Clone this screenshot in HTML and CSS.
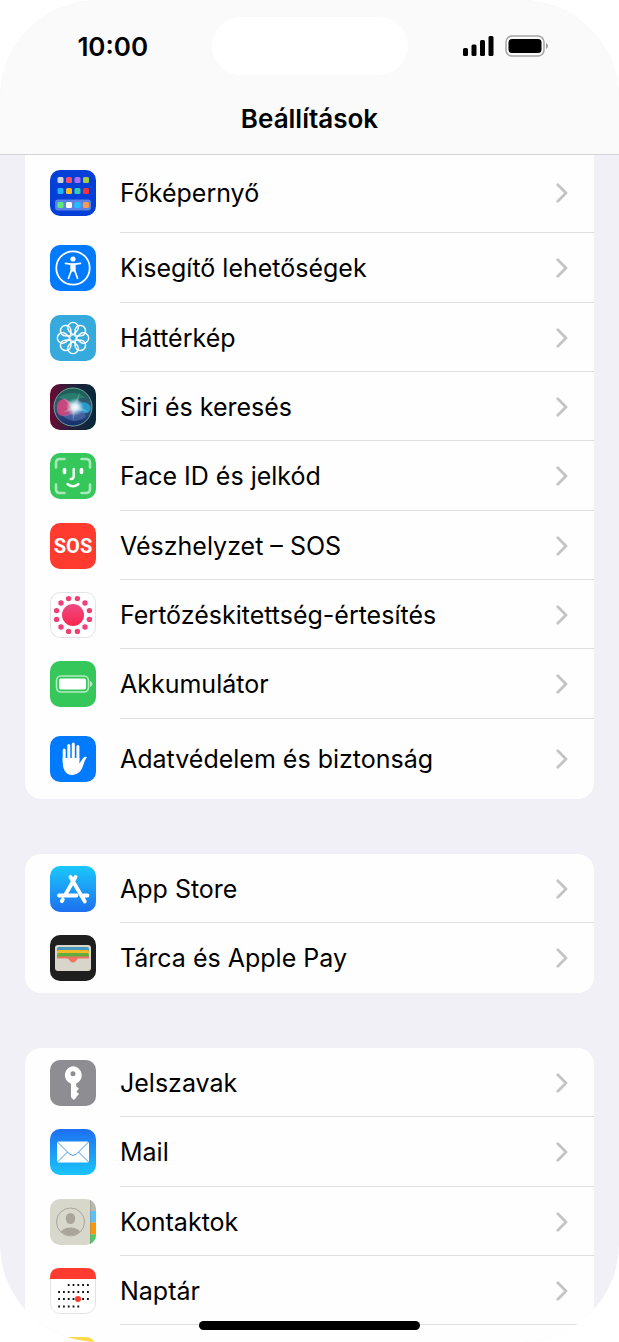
FILE: index.html
```html
<!DOCTYPE html>
<html lang="hu">
<head>
    <meta charset="UTF-8">
    <meta name="viewport" content="width=device-width, initial-scale=1.0">
    <title>Beállítások</title>
    <link rel="stylesheet" href="styles.css">
</head>
<body>
    <svg class="defs" aria-hidden="true">
        <defs>
            <symbol id="chevron" viewBox="0 0 12 20">
                <path d="M1.800 1.800 10 10l-8.200 8.200" fill="none" stroke="#c4c4c6" stroke-width="2.800" stroke-linecap="round" stroke-linejoin="round"/>
            </symbol>
            <linearGradient id="storeBlue" x1="0" y1="0" x2="0" y2="1">
                <stop offset="0" stop-color="#1ac8fc"/>
                <stop offset="1" stop-color="#1d70f0"/>
            </linearGradient>
            <linearGradient id="mailBlue" x1="0" y1="0" x2="0" y2="1">
                <stop offset="0" stop-color="#1e6ff1"/>
                <stop offset="1" stop-color="#19c5fb"/>
            </linearGradient>
            <linearGradient id="siriBack" x1="0" y1="0" x2="1" y2="0">
                <stop offset="0" stop-color="#6b0b33"/>
                <stop offset="0.500" stop-color="#22203c"/>
                <stop offset="1" stop-color="#05293a"/>
            </linearGradient>
            <linearGradient id="siriOrb" x1="0" y1="0" x2="0" y2="1">
                <stop offset="0" stop-color="#176052"/>
                <stop offset="0.500" stop-color="#3b5977"/>
                <stop offset="1" stop-color="#15296e"/>
            </linearGradient>
            <radialGradient id="siriGlow">
                <stop offset="0" stop-color="#fff"/>
                <stop offset="0.350" stop-color="#e8fbff" stop-opacity="0.850"/>
                <stop offset="1" stop-color="#bfefff" stop-opacity="0"/>
            </radialGradient>
            <linearGradient id="virusPink" x1="0" y1="0" x2="0" y2="1">
                <stop offset="0" stop-color="#ee4a83"/>
                <stop offset="1" stop-color="#fa2550"/>
            </linearGradient>
            <path id="petal" d="M23 20 18.800 15.700A5.200 5.200 0 1 1 27.200 15.700Z"/>
        </defs>
    </svg>

    <div class="phone">
        <header class="header">
            <div class="status-bar">
                <span class="time">10:00</span>
                <div class="island"></div>
                <div class="status-icons">
                    <svg width="32" height="20" viewBox="0 0 32 20" aria-label="Térerő">
                        <rect x="0" y="12" width="5" height="8" rx="1.500"/>
                        <rect x="8.500" y="8.500" width="5" height="11.500" rx="1.500"/>
                        <rect x="17" y="4" width="5" height="16" rx="1.500"/>
                        <rect x="25.500" y="0" width="5" height="20" rx="1.500"/>
                    </svg>
                    <svg width="44" height="22" viewBox="0 0 44 22" aria-label="Akkumulátor">
                        <rect x="1" y="1" width="38" height="20" rx="6" fill="none" stroke="#a5a5a5" stroke-width="1.500"/>
                        <rect x="3.500" y="4" width="33" height="14" rx="3.500"/>
                        <path d="M41 8q2 .8 2 3t-2 3z" fill="#999"/>
                    </svg>
                </div>
            </div>
            <h1>Beállítások</h1>
        </header>

        <main class="content">
            <ul class="group group-top">
                <li class="row row-first">
                    <a href="#">
                        <svg class="icon" viewBox="0 0 46 46">
                            <rect width="46" height="46" rx="10" fill="#0440d8"/>
                            <rect x="5" y="29.500" width="36" height="11" rx="3" fill="#5b82e6"/>
                            <g>
                                <rect x="7.500" y="7" width="6" height="6" rx="1.500" fill="#cdd5dc"/>
                                <rect x="16" y="7" width="6" height="6" rx="1.500" fill="#f4506a"/>
                                <rect x="24.500" y="7" width="6" height="6" rx="1.500" fill="#ac6cf5"/>
                                <rect x="33" y="7" width="6" height="6" rx="1.500" fill="#a4cd44"/>
                                <rect x="7.500" y="18" width="6" height="6" rx="1.500" fill="#1cb4fa"/>
                                <rect x="16" y="18" width="6" height="6" rx="1.500" fill="#fabf1c"/>
                                <rect x="24.500" y="18" width="6" height="6" rx="1.500" fill="#36cda8"/>
                                <rect x="33" y="18" width="6" height="6" rx="1.500" fill="#f0323c"/>
                                <rect x="7.500" y="32" width="6" height="6" rx="1.500" fill="#5ce87c"/>
                                <rect x="16" y="32" width="6" height="6" rx="1.500" fill="#fff"/>
                                <rect x="24.500" y="32" width="6" height="6" rx="1.500" fill="#1cc3fa"/>
                                <rect x="33" y="32" width="6" height="6" rx="1.500" fill="#f99b50"/>
                            </g>
                        </svg>
                        <span class="label">Főképernyő</span>
                        <svg class="chevron"><use href="#chevron"/></svg>
                    </a>
                </li>
                <li class="row">
                    <a href="#">
                        <svg class="icon" viewBox="0 0 46 46">
                            <rect width="46" height="46" rx="10" fill="#007aff"/>
                            <circle cx="23" cy="23" r="16.700" fill="none" stroke="#fff" stroke-width="1.800"/>
                            <circle cx="23" cy="14" r="2.600" fill="#fff"/>
                            <path d="M15.500 18.300 21 19.200h4l5.500-.9M21.300 20v5.500l-2.800 7.800M24.700 20v5.500l2.800 7.800" fill="none" stroke="#fff" stroke-width="1.700" stroke-linecap="round" stroke-linejoin="round"/>
                            <path d="M20.700 18.700h4.600v6.800l-1 2-1.300-1.500-1.300 1.500-1-2z" fill="#fff"/>
                        </svg>
                        <span class="label">Kisegítő lehetőségek</span>
                        <svg class="chevron"><use href="#chevron"/></svg>
                    </a>
                </li>
                <li class="row">
                    <a href="#">
                        <svg class="icon" viewBox="0 0 46 46">
                            <rect width="46" height="46" rx="10" fill="#36aadc"/>
                            <g fill="none" stroke="#fff" stroke-width="1.500" stroke-linejoin="round">
                                <use href="#petal"/>
                                <use href="#petal" transform="rotate(45 23 23)"/>
                                <use href="#petal" transform="rotate(90 23 23)"/>
                                <use href="#petal" transform="rotate(135 23 23)"/>
                                <use href="#petal" transform="rotate(180 23 23)"/>
                                <use href="#petal" transform="rotate(225 23 23)"/>
                                <use href="#petal" transform="rotate(270 23 23)"/>
                                <use href="#petal" transform="rotate(315 23 23)"/>
                            </g>
                        </svg>
                        <span class="label">Háttérkép</span>
                        <svg class="chevron"><use href="#chevron"/></svg>
                    </a>
                </li>
                <li class="row">
                    <a href="#">
                        <svg class="icon" viewBox="0 0 46 46">
                            <rect width="46" height="46" rx="10" fill="url(#siriBack)"/>
                            <circle cx="23" cy="23" r="19" fill="url(#siriOrb)" stroke="#69a99b" stroke-width="1"/>
                            <path d="M7 25C6 15 16 11 21 20l6 6c-5 5-9 7-14 6-4 0-6-3-6-7z" fill="#e0457d" opacity="0.850"/>
                            <path d="M25 23c5-6 12-6 15-1 2 5-2 8-7 7-4-1-6-4-8-6z" fill="#22a8d8" opacity="0.850"/>
                            <path d="M12 31c7 1 12-8 16-16 4 5 6 12 8 18-7 5-16 6-24-2z" fill="#5c7fc8" opacity="0.500"/>
                            <path d="M8 14c8-6 20-7 28 0-8-1-10 4-13 9-3-5-7-9-15-9z" fill="#2a9c7c" opacity="0.500"/>
                            <path d="M12 13 24 20 30 8l-3 13 12 7-13-2-3 11-1-11-10 3 9-6z" fill="#dff" opacity="0.250"/>
                            <circle cx="25" cy="23" r="9" fill="url(#siriGlow)"/>
                        </svg>
                        <span class="label">Siri és keresés</span>
                        <svg class="chevron"><use href="#chevron"/></svg>
                    </a>
                </li>
                <li class="row">
                    <a href="#">
                        <svg class="icon" viewBox="0 0 46 46">
                            <rect width="46" height="46" rx="10" fill="#35c759"/>
                            <path d="M6 14.500V10q0-4 4-4h4.500M31.500 6H36q4 0 4 4v4.500M40 31.500V36q0 4-4 4h-4.500M14.500 40H10q-4 0-4-4v-4.500" fill="none" stroke="#a9e8b8" stroke-width="2.600" stroke-linecap="round"/>
                            <path d="M14.500 16.500v3M31.500 16.500v3" fill="none" stroke="#fff" stroke-width="3.600" stroke-linecap="round"/>
                            <path d="M23.700 16v7.500q0 2.500-3 2.500M17.500 31q5.500 4.500 11 0" fill="none" stroke="#fff" stroke-width="2.400" stroke-linecap="round"/>
                        </svg>
                        <span class="label">Face ID és jelkód</span>
                        <svg class="chevron"><use href="#chevron"/></svg>
                    </a>
                </li>
                <li class="row">
                    <a href="#">
                        <svg class="icon" viewBox="0 0 46 46">
                            <rect width="46" height="46" rx="10" fill="#ff3b30"/>
                            <text class="sos" x="23" y="30" text-anchor="middle">SOS</text>
                        </svg>
                        <span class="label">Vészhelyzet – SOS</span>
                        <svg class="chevron"><use href="#chevron"/></svg>
                    </a>
                </li>
                <li class="row">
                    <a href="#">
                        <svg class="icon" viewBox="0 0 46 46">
                            <rect x="0.500" y="0.500" width="45" height="45" rx="10" fill="#fff" stroke="#e3e3e6"/>
                            <circle cx="23" cy="23" r="11" fill="url(#virusPink)"/>
                            <g fill="#ef3f75">
                                <circle cx="18.600" cy="6.600" r="2.700"/>
                                <circle cx="27.400" cy="6.600" r="2.700"/>
                                <circle cx="35" cy="11" r="2.700"/>
                                <circle cx="39.400" cy="18.600" r="2.700"/>
                                <circle cx="39.400" cy="27.400" r="2.700"/>
                                <circle cx="35" cy="35" r="2.700"/>
                                <circle cx="27.400" cy="39.400" r="2.700"/>
                                <circle cx="18.600" cy="39.400" r="2.700"/>
                                <circle cx="11" cy="35" r="2.700"/>
                                <circle cx="6.600" cy="27.400" r="2.700"/>
                                <circle cx="6.600" cy="18.600" r="2.700"/>
                                <circle cx="11" cy="11" r="2.700"/>
                            </g>
                        </svg>
                        <span class="label">Fertőzéskitettség-értesítés</span>
                        <svg class="chevron"><use href="#chevron"/></svg>
                    </a>
                </li>
                <li class="row">
                    <a href="#">
                        <svg class="icon" viewBox="0 0 46 46">
                            <rect width="46" height="46" rx="10" fill="#35c759"/>
                            <rect x="6.500" y="15" width="32" height="16" rx="4.500" fill="none" stroke="#b5ebc2" stroke-width="1.600"/>
                            <rect x="9" y="17.500" width="27" height="11" rx="2" fill="#fff"/>
                            <path d="M40 20q2.500 1 2.500 3T40 26z" fill="#b5ebc2"/>
                        </svg>
                        <span class="label">Akkumulátor</span>
                        <svg class="chevron"><use href="#chevron"/></svg>
                    </a>
                </li>
                <li class="row row-last">
                    <a href="#">
                        <svg class="icon" viewBox="0 0 46 46">
                            <rect width="46" height="46" rx="10" fill="#007aff"/>
                            <path d="M14.200 25V14M18.800 23V9.500M23.300 23V8M27.900 24V10.500" fill="none" stroke="#fff" stroke-width="3" stroke-linecap="round"/>
                            <path d="M12.700 22h16.700v5.500l3.800-5.500q1.500-1.800 3.800-1-1.600 2-3 6-2 6.500-4.500 9-3 3-7 3-5.500 0-8-4.500-1.800-3.500-1.800-8z" fill="#fff"/>
                        </svg>
                        <span class="label">Adatvédelem és biztonság</span>
                        <svg class="chevron"><use href="#chevron"/></svg>
                    </a>
                </li>
            </ul>

            <ul class="group">
                <li class="row">
                    <a href="#">
                        <svg class="icon" viewBox="0 0 46 46">
                            <rect width="46" height="46" rx="10" fill="url(#storeBlue)"/>
                            <g fill="none" stroke="#fff" stroke-width="3.800" stroke-linecap="round">
                                <path d="M25.500 11 15.500 28.500M20.500 11l14.300 24.500M9 29.500h17.500M33 29.500h4.500M12.800 33.500l-1 1.700"/>
                            </g>
                        </svg>
                        <span class="label">App Store</span>
                        <svg class="chevron"><use href="#chevron"/></svg>
                    </a>
                </li>
                <li class="row">
                    <a href="#">
                        <svg class="icon" viewBox="0 0 46 46">
                            <rect width="46" height="46" rx="10" fill="#1f1f1f"/>
                            <rect x="5" y="10" width="36" height="26" rx="3" fill="#d8d6ca"/>
                            <path d="M7 14q0-2 2-2h28q2 0 2 2v2H7z" fill="#4799bd"/>
                            <path d="M7 17q0-2 2-2h28q2 0 2 2v2H7z" fill="#f2b928"/>
                            <path d="M7 20q0-2 2-2h28q2 0 2 2v2H7z" fill="#63ad3c"/>
                            <path d="M7 21.500h32v2H29q-1.500 0-2.500 1.700-1.200 2.300-3.500 2.300t-3.500-2.300q-1-1.700-2.500-1.700H7z" fill="#ee7564"/>
                        </svg>
                        <span class="label">Tárca és Apple Pay</span>
                        <svg class="chevron"><use href="#chevron"/></svg>
                    </a>
                </li>
            </ul>

            <ul class="group">
                <li class="row">
                    <a href="#">
                        <svg class="icon" viewBox="0 0 46 46">
                            <rect width="46" height="46" rx="10" fill="#8e8e92"/>
                            <path fill-rule="evenodd" d="M23 6.300a9 9 0 0 1 3.200 17.300v2.700l2.800 2.500-2.600 2.600 2.600 2.600-2.600 2.800v.7L23.800 40 21 37.200V23.800A9 9 0 0 1 23 6.300zm0 5a2.500 2.500 0 1 0 0 5 2.500 2.500 0 0 0 0-5z" fill="#fff"/>
                        </svg>
                        <span class="label">Jelszavak</span>
                        <svg class="chevron"><use href="#chevron"/></svg>
                    </a>
                </li>
                <li class="row">
                    <a href="#">
                        <svg class="icon" viewBox="0 0 46 46">
                            <rect width="46" height="46" rx="10" fill="url(#mailBlue)"/>
                            <rect x="7" y="12.500" width="32" height="21" rx="1.500" fill="#fff"/>
                            <path d="m7.500 13 12 12q3.500 3 7 0l12-12M7.500 33l10-10M38.500 33l-10-10" fill="none" stroke="#3b9bf0" stroke-width="1"/>
                        </svg>
                        <span class="label">Mail</span>
                        <svg class="chevron"><use href="#chevron"/></svg>
                    </a>
                </li>
                <li class="row">
                    <a href="#">
                        <svg class="icon" viewBox="0 0 46 46">
                            <clipPath id="contactsClip"><rect width="46" height="46" rx="10"/></clipPath>
                            <clipPath id="personClip"><circle cx="20.500" cy="23" r="13.500"/></clipPath>
                            <g clip-path="url(#contactsClip)">
                                <rect width="46" height="46" fill="#d8d7cb"/>
                                <rect x="40" y="0" width="6" height="12" fill="#b9b8ae"/>
                                <rect x="40" y="12" width="6" height="11.500" fill="#5bc0f8"/>
                                <rect x="40" y="23.500" width="6" height="12" fill="#fb9509"/>
                                <rect x="40" y="35.500" width="6" height="11" fill="#4bcb62"/>
                                <path d="M40.500 0v46" stroke="#8b8b80" stroke-opacity="0.500"/>
                                <g clip-path="url(#personClip)" fill="#aaa59b">
                                    <ellipse cx="20.500" cy="19.500" rx="4.700" ry="5.500"/>
                                    <ellipse cx="20.500" cy="36" rx="11" ry="7.500"/>
                                </g>
                                <circle cx="20.500" cy="23" r="14" fill="none" stroke="#aaa59b" stroke-width="1"/>
                            </g>
                        </svg>
                        <span class="label">Kontaktok</span>
                        <svg class="chevron"><use href="#chevron"/></svg>
                    </a>
                </li>
                <li class="row">
                    <a href="#">
                        <svg class="icon" viewBox="0 0 46 46">
                            <rect x="0.500" y="0.500" width="45" height="45" rx="10" fill="#fff" stroke="#e3e3e6"/>
                            <path d="M0 11v-1Q0 0 10 0h26q10 0 10 10v1z" fill="#ff3b30"/>
                            <g fill="none" stroke="#111" stroke-width="1.800" stroke-dasharray="1.800 3">
                                <path d="M17.800 17h21.200M8.200 24h30.800M8.200 31h30.800M8.200 38.500h21.200"/>
                            </g>
                            <circle cx="28" cy="31" r="3" fill="#ff3b30"/>
                        </svg>
                        <span class="label">Naptár</span>
                        <svg class="chevron"><use href="#chevron"/></svg>
                    </a>
                </li>
                <li class="row">
                    <a href="#" aria-label="Jegyzetek">
                        <svg class="icon" viewBox="0 0 46 46">
                            <rect width="46" height="46" rx="10" fill="#fdd84b"/>
                        </svg>
                    </a>
                </li>
            </ul>
        </main>

        <div class="home-indicator"></div>
    </div>
</body>
</html>
```
FILE: styles.css
```css
* {
    box-sizing: border-box;
}
body {
    font-family: Inter, 'Liberation Sans', sans-serif;
    background-color: #fff;
    margin: 0;
    color: #000;
}
.defs {
    position: absolute;
    width: 0;
    height: 0;
}
.phone {
    position: relative;
    display: flex;
    flex-direction: column;
    height: 100vh;
    overflow: hidden;
    border-radius: 98px;
    background: #f1f0f6;
}
.header {
    flex: none;
    background: #fafafa;
    border-bottom: 1px solid #d3d3d5;
    padding: 17px 0 19px;
}
.status-bar {
    display: grid;
    grid-template-columns: 1fr 196px 1fr;
    align-items: center;
}
.time {
    padding-left: 14px;
    font-size: 26px;
    font-weight: 600;
    text-align: center;
}
.island {
    height: 58px;
    border-radius: 29px;
    background: #fff;
}
.status-icons {
    display: flex;
    justify-content: center;
    align-items: center;
    gap: 10px;
    padding-right: 14px;
}
h1 {
    margin: 28px 0 0;
    font-size: 26px;
    font-weight: 600;
    line-height: 32px;
    text-align: center;
}
.content {
    flex: 1;
    min-height: 0;
    padding: 0 25px;
}
.group {
    list-style: none;
    margin: 0 0 55px;
    padding: 0;
    border-radius: 16px;
    background: #fefefe;
    overflow: hidden;
}
.group-top {
    border-radius: 0 0 16px 16px;
}
.row a {
    position: relative;
    display: flex;
    align-items: center;
    gap: 24px;
    height: 69px;
    padding: 0 26px 0 25px;
    color: inherit;
    text-decoration: none;
}
.row:nth-child(3n+2) a {
    height: 70px;
}
.row-first a {
    height: 78px;
    padding-bottom: 2px;
}
.row-last a {
    height: 80px;
}
/* hairline starts under the label, not under the icon */
.row:not(:last-child) a::after {
    content: '';
    position: absolute;
    left: 95px;
    right: 0;
    bottom: 0;
    height: 1px;
    background: #dededf;
}
.icon {
    flex: none;
    width: 46px;
    height: 46px;
}
.label {
    flex: 1;
    font-size: 25px;
    line-height: 32px;
    white-space: nowrap;
}
.chevron {
    flex: none;
    width: 12px;
    height: 20px;
}
.sos {
    font-family: Roboto, 'Open Sans', sans-serif;
    font-size: 20px;
    font-weight: 700;
    fill: #fff;
}
.home-indicator {
    position: absolute;
    left: 50%;
    bottom: 12px;
    width: 221px;
    height: 9px;
    margin-left: -111px;
    border-radius: 5px;
    background: #000;
}
```
